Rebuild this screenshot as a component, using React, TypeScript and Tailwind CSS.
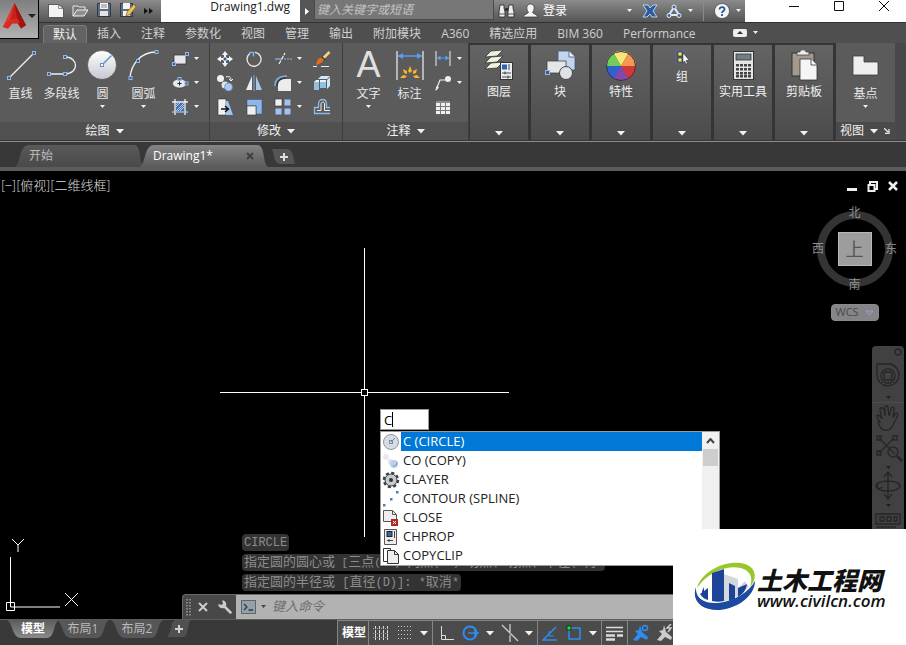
import type { ReactNode } from "react";

const SANS = "font-['Open_Sans','Noto_Sans','Noto_Sans_CJK_SC',sans-serif]";
const MONO = "font-['Liberation_Mono','Noto_Sans_CJK_SC',monospace]";

type IconProps = { w: number; h?: number; className?: string; children: ReactNode };

function Icon({ w, h = w, className = "", children }: IconProps) {
  return (
    <svg width={w} height={h} viewBox={`0 0 ${w} ${h}`} fill="none" className={`shrink-0 ${className}`} aria-hidden="true">
      {children}
    </svg>
  );
}

function Caret({ big = false }: { big?: boolean }) {
  return big ? (
    <Icon w={8} h={5}><path d="M0 0h8L4 4.500z" fill="#f2f2f2" /></Icon>
  ) : (
    <Icon w={5} h={4}><path d="M0 0h5L2.500 3z" fill="#f2f2f2" /></Icon>
  );
}

// Small blue grip square used on the drawing tools
function Grip({ x, y }: { x: number; y: number }) {
  return <rect x={x - 1.5} y={y - 1.5} width="3" height="3" fill="#4c5a70" stroke="#8fb8ee" />;
}

/* ---------- Draw ---------- */

const lineIcon = (
  <Icon w={36}>
    <path d="M6 31 31 6" stroke="#f0f0f0" strokeWidth="1.300" />
    <Grip x={6} y={31} /><Grip x={31} y={6} />
  </Icon>
);

const polylineIcon = (
  <Icon w={36}>
    <path d="M5 27h16c14 0 14-17 0-17" stroke="#f0f0f0" strokeWidth="1.300" />
    <Grip x={5} y={27} /><Grip x={21} y={27} /><Grip x={21} y={10} />
  </Icon>
);

const circleIcon = (
  <Icon w={36}>
    <defs>
      <linearGradient id="ball" x1="0" y1="0" x2="0" y2="1">
        <stop offset="0" stopColor="#ffffff" /><stop offset="1" stopColor="#c4c7ce" />
      </linearGradient>
    </defs>
    <circle cx="17" cy="18" r="14.500" fill="url(#ball)" stroke="#3b3b3b" strokeWidth=".6" />
    <path d="M17 18 26.500 8.500" stroke="#5f8fc6" strokeWidth="1.500" />
    <rect x="15.500" y="16.500" width="3" height="3" fill="#fff" stroke="#5f8fc6" />
  </Icon>
);

const arcIcon = (
  <Icon w={36}>
    <path d="M4 31C5 17 15 5 30 5" stroke="#f0f0f0" strokeWidth="1.300" />
    <Grip x={4.5} y={31} /><Grip x={12} y={14} /><Grip x={30.5} y={5} />
  </Icon>
);

const rectIcon = (
  <Icon w={18}>
    <rect x="3" y="5" width="12" height="9" fill="#e6e7ea" stroke="#2d2d2d" strokeWidth=".7" />
    <Grip x={16} y={4} /><Grip x={3} y={14} />
  </Icon>
);

const ellipseIcon = (
  <Icon w={18}>
    <ellipse cx="8.500" cy="9.500" rx="7" ry="4.500" fill="#e6e7ea" stroke="#333" strokeWidth=".6" />
    <path d="M6.500 9.500h4M8.500 7.500v4" stroke="#222" />
    <Grip x={8.5} y={5} /><Grip x={15.5} y={9.5} />
  </Icon>
);

const hatchIcon = (
  <Icon w={18}>
    <rect x="4.500" y="4.500" width="9" height="9" fill="#4a6ea5" />
    <path d="m5 9 4-4M5 13l8-8M9 13l4-4M5 7l2-2M7 13l6-6" stroke="#a9ccf5" />
    <path d="M4 1v16M14 1v16M1 4h16" stroke="#f1f1f1" strokeWidth="1.300" />
    <path d="M1 14h16" stroke="#9cc3f3" strokeWidth="1.300" />
  </Icon>
);

/* ---------- Modify ---------- */

const moveIcon = (
  <Icon w={18}>
    <path d="M9 3v4M9 11v4M3 9h4M11 9h4" stroke="#f3f3f3" strokeWidth="2" />
    <path d="m9 1 3 4H6zM9 17l-3-4h6zM1 9l4-3v6zM17 9l-4 3V6z" fill="#f3f3f3" />
    <rect x="7.500" y="7.500" width="3" height="3" fill="#4c5a70" stroke="#8fb8ee" />
  </Icon>
);
const rotateIcon = (
  <Icon w={18}>
    <path d="M5 3.500a7 7 0 1 0 5-1.200" stroke="#e9e9e9" strokeWidth="1.300" />
    <path d="M4 2.500h4.500v4" stroke="#7fb0ee" strokeWidth="1.500" />
  </Icon>
);
const trimIcon = (
  <Icon w={18}>
    <path d="M1 9h6" stroke="#8fb8ee" strokeWidth="1.200" />
    <path d="M10 9h8" stroke="#8fb8ee" strokeDasharray="2 1" />
    <path d="M5 14 11 3" stroke="#f1f1f1" strokeWidth="1.200" strokeDasharray="4 1" />
  </Icon>
);
const eraseIcon = (
  <Icon w={18}>
    <path d="M16.500 2 9 9.500" stroke="#f5d48c" strokeWidth="2.500" />
    <path d="M9 8c3 2 1 5-6 7 1-4 2-8 6-7z" fill="#e86b18" />
    <path d="m9 7 3 3" stroke="#333" strokeWidth="1.500" />
    <path d="M0 16.500h4m4 0h8" stroke="#eee" />
  </Icon>
);
const copyIcon = (
  <Icon w={18}>
    <circle cx="4.500" cy="4.500" r="3.500" fill="#f1f1f1" />
    <circle cx="9" cy="11" r="3.500" fill="#dfe6f0" />
    <circle cx="12.500" cy="13" r="4" fill="#a9c8f0" stroke="#5f7fa8" strokeWidth=".6" />
    <path d="M10 3c3-1 5 0 5 3m-2-1 2 2 2-2" stroke="#f1f1f1" />
  </Icon>
);
const mirrorIcon = (
  <Icon w={18}>
    <path d="M7 2v14H1z" fill="#ededed" /><path d="M11 2v14h6z" fill="#aac4e6" />
    <path d="M9 1v16" stroke="#6fa5ea" />
  </Icon>
);
const filletIcon = (
  <Icon w={18}>
    <path d="M4 17V11c0-4 4-6 7-6h6v12z" fill="#ececee" />
    <path d="M1 12C1 5 6 2 13 2" stroke="#7fb0ee" strokeWidth="1.500" />
    <path d="M3 12c0-5 4-8 9-8" stroke="#222" />
  </Icon>
);
const explodeIcon = (
  <Icon w={18}>
    <path d="m5 5 3-3h9l-3 3zM14 6l3-3v9l-3 3z" fill="#cfe6f3" />
    <path d="M1 8h5v8H1zM7 6h6v8H7z" fill="#93bfdd" />
    <path d="m1 8 2-2h3v2zM7 6h6v2H7z" fill="#e5f2f8" />
  </Icon>
);
const stretchIcon = (
  <Icon w={18}>
    <path d="M2 1h8v16H2z" fill="#f2f2f2" stroke="#333" strokeWidth=".6" />
    <path d="M10 3h2l5 14h-7z" fill="#9fc4f2" />
    <path d="M5 11h7m-3-3 3.500 3L9 14" stroke="#111" strokeWidth="1.400" />
  </Icon>
);
const scaleIcon = (
  <Icon w={18}>
    <path d="M2 1.500h15V16H11V8H2z" fill="#8fb6ea" stroke="#405b82" strokeWidth=".6" />
    <rect x="2" y="8" width="9" height="9" fill="#efefef" stroke="#333" strokeWidth=".6" />
  </Icon>
);
const arrayIcon = (
  <Icon w={18}>
    <rect x="1" y="1" width="7" height="7" fill="#f0f0f0" stroke="#333" strokeWidth=".6" />
    <rect x="10.500" y="1.500" width="6" height="6" fill="#9fc4f2" />
    <rect x="1.500" y="10.500" width="6" height="6" fill="#9fc4f2" />
    <rect x="10.500" y="10.500" width="6" height="6" fill="#9fc4f2" />
  </Icon>
);
const offsetIcon = (
  <Icon w={18}>
    <path d="M17 15.500H1.500V9.500H5.500V6c0-6 8-6 8 0v3.500H17" stroke="#8fb8ee" strokeWidth="1.300" />
    <path d="M17 12.500h-5.500V6c0-2.500-3.500-2.500-3.500 0v6.500H4" stroke="#f1f1f1" />
  </Icon>
);

/* ---------- Annotate ---------- */

const dimIcon = (
  <Icon w={36}>
    <path d="M5 4v29M31 4v29" stroke="#f0f0f0" strokeWidth="1.200" />
    <path d="M6 9h24" stroke="#57a0f5" strokeWidth="1.400" />
    <path d="m6 9 5-3v6zM30 9l-5-3v6z" fill="#57a0f5" />
    <g fill="#f7b52b">
      <path d="m18 19 2 5-2 2-2-2zM11 22l4 2v3l-3-1zM25 22l-4 2v3l3-1zM8 31l3-3 4 1-2 2zM28 31l-3-3-4 1 2 2z" />
    </g>
  </Icon>
);
const linearDimIcon = (
  <Icon w={18}>
    <path d="M2 1v15M16 1v15" stroke="#f0f0f0" />
    <path d="M3 8h12" stroke="#57a0f5" />
    <path d="m3 8 3.500-2.500v5zM15 8l-3.500-2.500v5z" fill="#57a0f5" />
  </Icon>
);
const leaderIcon = (
  <Icon w={18}>
    <path d="M2 16 6 6h7" stroke="#f0f0f0" strokeWidth="1.200" />
    <path d="m1.500 17 1-5 2.500 1.500z" fill="#f0f0f0" />
    <circle cx="14" cy="5" r="3" fill="#f0f0f0" />
  </Icon>
);
const tableIcon = (
  <Icon w={18}>
    <rect x="1.500" y="2.500" width="15" height="14" fill="#f0f0f0" stroke="#333" strokeWidth=".6" />
    <path d="M2 4h14" stroke="#8a8a8a" strokeWidth="2" />
    <path d="M2 8.500h14M2 12.500h14M6.500 5v11M11.500 5v11" stroke="#777" />
  </Icon>
);

/* ---------- Collapsed panels ---------- */

const layersIcon = (
  <Icon w={32}>
    <g fill="#eef1e2" stroke="#2e3a2e" strokeWidth=".8">
      <path d="m8 13 12-1-6 6-12 1z" /><path d="m8 7 12-1-6 6-12 1z" /><path d="M8 1 20 0l-6 6-12 1z" />
    </g>
    <rect x="17.500" y="12.500" width="12" height="17" fill="#eceef2" stroke="#333" />
    <rect x="19" y="14.500" width="5" height="5" fill="#2e62b5" />
    <path d="M26 14v6M19 23h9M19 27h9M22 21.500v3M25 25.500v3" stroke="#333" strokeWidth=".9" />
  </Icon>
);
const blockIcon = (
  <Icon w={32}>
    <path d="M14 1h11l6 6v13H14z" fill="#c3d5ee" stroke="#3f5677" strokeWidth=".8" />
    <path d="M25 1v6h6" fill="#e9f1fb" stroke="#3f5677" strokeWidth=".8" />
    <rect x="3" y="11" width="19" height="12" fill="#e4e6ea" stroke="#444" strokeWidth=".8" />
    <circle cx="22" cy="23" r="6.500" fill="#dfe1e5" stroke="#444" />
    <rect x="1.500" y="20.500" width="4" height="4" fill="#4c5a70" stroke="#8fb8ee" />
  </Icon>
);
const wheelIcon = (
  <Icon w={32}>
    <path d="M16 16 8.500 3a15 15 0 0 1 15 0z" fill="#f8e678" />
    <path d="M16 16 23.500 3A15 15 0 0 1 31 16z" fill="#f29a52" />
    <path d="M16 16h15a15 15 0 0 1-7.500 13z" fill="#d4373a" />
    <path d="m16 16 7.500 13a15 15 0 0 1-15 0z" fill="#8347ae" />
    <path d="M16 16 8.500 29A15 15 0 0 1 1 16z" fill="#2f62cf" />
    <path d="M16 16H1A15 15 0 0 1 8.500 3z" fill="#72cc5a" />
    <circle cx="16" cy="16" r="14.500" stroke="#343434" />
  </Icon>
);
const groupIcon = (
  <Icon w={16}>
    <rect x="1.500" y="1.500" width="9" height="12" stroke="#4b63d8" strokeDasharray="1 1" />
    <rect x="4" y="3" width="4" height="4" fill="#d8e686" stroke="#222" strokeWidth=".6" />
    <rect x="4" y="9" width="4" height="4" fill="#d8e686" stroke="#222" strokeWidth=".6" />
    <path d="m9 4 6 7-3 .5 1.500 3-1.500.5-1.500-3L9 14z" fill="#fff" stroke="#222" strokeWidth=".5" />
  </Icon>
);
const calcIcon = (
  <Icon w={32}>
    <rect x="6.500" y="1.500" width="20" height="28" fill="#e6e6e6" stroke="#333" />
    <rect x="9" y="4" width="15" height="6" fill="#6f7f86" stroke="#333" strokeWidth=".8" />
    <g fill="#444">
      {[14, 18, 22, 25].map((y) => [9, 13, 17, 21].map((x) => <rect key={`${x}-${y}`} x={x} y={y} width="3" height="2.500" />))}
    </g>
  </Icon>
);
const pasteIcon = (
  <Icon w={32}>
    <rect x="4" y="3" width="22" height="23" fill="#a3998c" stroke="#333" />
    <path d="M9 5V2h3c0-3 6-3 6 0h3v3z" fill="#ececec" stroke="#333" strokeWidth=".7" />
    <path d="M12 9h11l6 6v15H12z" fill="#f5f5f5" stroke="#333" strokeWidth=".8" />
    <path d="M23 9v6h6" fill="#fff" stroke="#333" strokeWidth=".8" />
  </Icon>
);
const baseIcon = (
  <Icon w={36}>
    <path d="M5 9h11v6h14v13H5z" fill="#efeff1" stroke="#3c3c3c" strokeWidth=".8" />
  </Icon>
);

type Tool = { icon: ReactNode; label: string; menu?: boolean };

function BigTool({ icon, label, menu }: Tool) {
  return (
    <button className="flex w-[41px] flex-col items-center text-[#e8e8e8]">
      <span className="flex h-9 items-center">{icon}</span>
      <span className="h-[22px] leading-[22px] whitespace-nowrap">{label}</span>
      {menu && <Caret />}
    </button>
  );
}

function SmallTool({ icon, label, menu }: Tool) {
  return (
    <button aria-label={label} className="flex h-6 items-center gap-[5px]">
      {icon}
      {menu && <Caret />}
    </button>
  );
}

function Panel({ title, width, children }: { title: string; width: string; children: ReactNode }) {
  return (
    <section className={`flex ${width} shrink-0 flex-col justify-between border-r border-[#3e3e3e] bg-[#5b5b5b] pt-1`}>
      <div className="flex">{children}</div>
      <button className="flex h-[18px] items-center justify-center gap-1.5 bg-[#505050] text-[#f0f0f0]">
        {title} <Caret big />
      </button>
    </section>
  );
}

function FoldedPanel({ icon, label, small }: { icon: ReactNode; label: string; small?: boolean }) {
  return (
    <button className={`mr-[3px] flex w-[58px] shrink-0 flex-col items-center bg-linear-to-b from-[#646464] to-[#4b4b4b] pb-1 text-[#f0f0f0] ${small ? "pt-1" : "pt-[5px]"}`}>
      {icon}
      <span className={`whitespace-nowrap ${small ? "mt-1 leading-4" : "leading-5"}`}>{label}</span>
      <span className="mt-auto"><Caret big /></span>
    </button>
  );
}

const drawSmall: Tool[] = [
  { icon: rectIcon, label: "矩形", menu: true },
  { icon: ellipseIcon, label: "椭圆", menu: true },
  { icon: hatchIcon, label: "图案填充", menu: true },
];

const modifyColumns: Tool[][] = [
  [{ icon: moveIcon, label: "移动" }, { icon: copyIcon, label: "复制" }, { icon: stretchIcon, label: "拉伸" }],
  [{ icon: rotateIcon, label: "旋转" }, { icon: mirrorIcon, label: "镜像" }, { icon: scaleIcon, label: "缩放" }],
  [
    { icon: trimIcon, label: "修剪", menu: true },
    { icon: filletIcon, label: "圆角", menu: true },
    { icon: arrayIcon, label: "阵列", menu: true },
  ],
  [{ icon: eraseIcon, label: "删除" }, { icon: explodeIcon, label: "分解" }, { icon: offsetIcon, label: "偏移" }],
];

const annotateSmall: Tool[] = [
  { icon: linearDimIcon, label: "线性", menu: true },
  { icon: leaderIcon, label: "引线", menu: true },
  { icon: tableIcon, label: "表格" },
];

const folded = [
  { icon: layersIcon, label: "图层" },
  { icon: blockIcon, label: "块" },
  { icon: wheelIcon, label: "特性" },
  { icon: groupIcon, label: "组", small: true },
  { icon: calcIcon, label: "实用工具" },
  { icon: pasteIcon, label: "剪贴板" },
];

function Ribbon() {
  return (
    <div className="flex h-[97px] overflow-hidden bg-[#353535]">
      <Panel title="绘图" width="w-[210px]">
        <BigTool icon={lineIcon} label="直线" />
        <BigTool icon={polylineIcon} label="多段线" />
        <BigTool icon={circleIcon} label="圆" menu />
        <BigTool icon={arcIcon} label="圆弧" menu />
        <div className="ml-[7px]">{drawSmall.map((t) => <SmallTool key={t.label} {...t} />)}</div>
      </Panel>
      <Panel title="修改" width="w-[133px]">
        <div className="flex gap-[11px] pl-1.5">
          {modifyColumns.map((col) => (
            <div key={col[0].label}>{col.map((t) => <SmallTool key={t.label} {...t} />)}</div>
          ))}
        </div>
      </Panel>
      <Panel title="注释" width="w-[126px]">
        <div className="flex pl-[5px]">
          <BigTool icon={<span className="font-['Liberation_Sans',sans-serif] text-4xl leading-9 text-[#e0e0e0]">A</span>} label="文字" menu />
          <BigTool icon={dimIcon} label="标注" />
          <div className="ml-1">{annotateSmall.map((t) => <SmallTool key={t.label} {...t} />)}</div>
        </div>
      </Panel>
      <div className="flex pt-0.5 pl-px">
        {folded.map((f) => <FoldedPanel key={f.label} {...f} />)}
      </div>
      <section className="flex w-[59px] shrink-0 flex-col justify-between bg-[#5b5b5b] pt-1">
        <div className="flex justify-center"><BigTool icon={baseIcon} label="基点" menu /></div>
        <button className="flex h-[18px] items-center gap-1.5 bg-[#4a4a4a] pl-1 text-[#f0f0f0]">
          视图 <Caret big />
          <Icon w={6}><path d="m0 0 4 4M5 1v4.500H1" stroke="#e8e8e8" strokeWidth="1.300" /></Icon>
        </button>
      </section>
      <div className="flex-1 bg-[#484848]" />
    </div>
  );
}

const menuTabs = ["默认", "插入", "注释", "参数化", "视图", "管理", "输出", "附加模块", "A360", "精选应用", "BIM 360", "Performance"];

function TitleBar() {
  return (
    <div className="flex h-[22px] items-stretch bg-linear-to-b from-[#8b8b8b] to-[#555555]">
      <div className="flex w-[122px] shrink-0 items-center gap-2 overflow-hidden pl-[9px]">
        <button aria-label="新建">
          <Icon w={16} h={18}><path d="M.5 2.500h10l5 4v9H.5z" fill="#f3f3f3" stroke="#333" strokeWidth=".7" /><path d="M10.500 2.500v4h5" stroke="#666" strokeWidth=".7" /></Icon>
        </button>
        <button aria-label="打开">
          <Icon w={16} h={18}><path d="M1 14V4h5l1 1h6v3" fill="#777" stroke="#e8e8e8" /><path d="m1 14 4-6h11l-4 6z" fill="#8d8d8d" stroke="#f0f0f0" /></Icon>
        </button>
        <button aria-label="保存">
          <Icon w={16} h={18}>
            <path d="M1.500 1.500h13v13h-13z" fill="#5e6c7d" stroke="#303844" />
            <path d="M4 1h8v6H4z" fill="#f4f4f4" /><path d="M4 9h8v5H4z" fill="#e3e3e3" /><path d="M5 3h6M5 5h6" stroke="#888" />
          </Icon>
        </button>
        <button aria-label="另存为">
          <Icon w={16} h={18}>
            <path d="M.500 1.500h12v13H.5z" fill="#5e6c7d" stroke="#303844" />
            <path d="M3 1h7v6H3zM3 9h7v5H3z" fill="#f4f4f4" /><path d="m14 2-7 8-1 4 4-1.500L16 5z" fill="#f0c257" stroke="#6b5017" strokeWidth=".6" />
          </Icon>
        </button>
        <button aria-label="更多"><Icon w={9} h={6}><path d="m0 0 4 3-4 3zM5 0l4 3-4 3z" fill="#111" /></Icon></button>
      </div>
      <div className="w-[139px] shrink-0 bg-white pr-2.5 text-right leading-[13px] text-[#222]">Drawing1.dwg</div>
      <button aria-label="展开搜索" className="flex w-3.5 shrink-0 items-center justify-center bg-[#555]">
        <Icon w={4} h={7}><path d="m0 0 4 3.500L0 7z" fill="#fff" /></Icon>
      </button>
      <input aria-label="搜索" placeholder="键入关键字或短语" className="mb-0.5 w-[180px] shrink-0 border-r border-b border-l border-[#4a4a4a] bg-[#777777] px-0.5 leading-5 italic outline-none placeholder:text-[#c4c4c4]" />
      <div className="flex flex-1 items-center pl-1 text-white">
        <button aria-label="查找">
          <Icon w={17} h={18}>
            <path d="M2 3h4v3l1 4v5H1v-5zM11 3h4v3l1 4v5h-6v-5z" fill="#eee" stroke="#222" strokeWidth=".8" />
            <path d="M7 6h3v3H7z" fill="#333" /><path d="M1 12h6M10 12h6" stroke="#555" />
          </Icon>
        </button>
        <button className="ml-2 flex items-center gap-[5px]">
          <Icon w={15} h={18}><path d="M7.500 2c5 0 4 7 2 8 0 2 5 2 5 5H.5c0-3 5-3 5-5-2-1-3-8 2-8z" fill="#f5f5f5" stroke="#333" strokeWidth=".7" /></Icon>
          登录
        </button>
        <div className="ml-auto flex items-center">
          <Caret />
          <button aria-label="Exchange" className="ml-2.5">
            <Icon w={16} h={14}><path d="M1 1h5l2 3 3-3h4l-4 6 4 6h-5l-2-3-3 3H1l4-6z" fill="#2c5c9e" stroke="#c9def5" strokeWidth=".9" /></Icon>
          </button>
          <button aria-label="A360" className="ml-2 flex items-center gap-1.5">
            <Icon w={16} h={15}>
              <path d="M8 3 3 11h10z" stroke="#dceaff" strokeWidth="2" />
              <g fill="#46679b" stroke="#e5efff"><circle cx="8" cy="3" r="2" /><circle cx="3" cy="11.500" r="2" /><circle cx="13" cy="11.500" r="2" /></g>
            </Icon>
            <Caret />
          </button>
          <span className="mx-2.5 h-5 w-px bg-[#8a8a8a]" />
          <button aria-label="帮助" className="flex items-center gap-1.5 pr-1">
            <Icon w={16}>
              <circle cx="8" cy="8" r="7.500" fill="#f5f5f5" stroke="#444" strokeWidth=".7" />
              <path d="M5.500 6.500c0-3.500 5.500-3 5 0-.3 1.500-2.500 1.500-2.500 3.500M8 11v2" stroke="#24569c" strokeWidth="1.800" />
            </Icon>
            <Caret />
          </button>
        </div>
      </div>
      <div className="flex w-[161px] shrink-0 justify-between bg-white pr-4 pl-11">
        <button aria-label="最小化"><Icon w={11} h={11} className="mb-2.5"><path d="M0 5.500h10" stroke="#111" /></Icon></button>
        <button aria-label="最大化"><Icon w={11} h={11} className="mb-2.5"><path d="M.5.500h9v9h-9z" stroke="#111" /></Icon></button>
        <button aria-label="关闭"><Icon w={11} h={11} className="mb-2.5"><path d="m0 0 10 10M10 0 0 10" stroke="#111" /></Icon></button>
      </div>
    </div>
  );
}

function Header() {
  return (
    <header className="flex bg-[#4f4f4f]">
      <button aria-label="应用程序菜单" className="flex h-[39px] w-[39px] shrink-0 items-center border-r border-b border-black bg-linear-to-b from-[#7f7f7f] to-[#b2b2b2] pb-1.5 pl-[3px]">
        <Icon w={23} h={26}>
          <path d="M11.500 0 0 24l5 1.500 4-5h6l3 5 5-3z" fill="#c4221c" />
          <path d="M11.500 0 0 24l7-7z" fill="#e2382e" />
          <path d="m11.500 0 11.500 22-5 3.500-3-5z" fill="#9f1411" />
          <path d="M0 24c4-7 9-9 15-8l2 4H9l-4 5.500z" fill="#db2a22" />
        </Icon>
        <Icon w={8} h={5} className="ml-0.5"><path d="M0 0h8L4 4z" fill="#222" /></Icon>
      </button>
      <div className="min-w-0 flex-1">
        <TitleBar />
        <nav className="flex h-[21px] border-t border-[#333] pl-1 text-[#cfcfcf]">
          {menuTabs.map((tab, i) => (
            <button
              key={tab}
              className={`mt-0.5 whitespace-nowrap ${i === 0 ? "rounded-t-sm border-x border-t border-[#7a7a7a] bg-[#636363] px-[9px] text-[#f0f0f0]" : "px-2.5"}`}
            >
              {tab}
            </button>
          ))}
          <button aria-label="最小化功能区" className="flex items-center gap-1.5 pl-[27px]">
            <Icon w={14} h={8}><rect width="14" height="8" rx="2" fill="#eeeeee" /><path d="m7 2 3 3H4z" fill="#333" /></Icon>
            <Caret />
          </button>
        </nav>
      </div>
    </header>
  );
}

function FileTabs() {
  return (
    <div className="mt-px flex h-[30px] items-end border-t border-b-4 border-t-[#8b8b8b] border-b-[#5b5b5b] bg-[#383838] pl-[15px]">
      <button className="h-[22px] w-[129px] bg-linear-to-b from-[#595959] to-[#4a4a4a] pl-3.5 text-left leading-[22px] text-[#bcbcbc] [clip-path:path('M0_22C6_18_4_0_14_0H119C127_0_123_17_129_22Z')]">
        开始
      </button>
      <div className="-ml-1 flex h-[22px] w-32 items-center justify-between bg-linear-to-b from-[#858585] to-[#5b5b5b] pr-3.5 pl-[13px] text-white [clip-path:path('M0_22C6_18_4_0_14_0H117C126_0_122_18_128_22Z')]">
        <button>Drawing1*</button>
        <button aria-label="关闭标签"><Icon w={8}><path d="m1 1 6 6M7 1 1 7" stroke="#3f3f3f" strokeWidth="2" /></Icon></button>
      </div>
      <button aria-label="新标签" className="mb-[3px] ml-1 flex h-[15px] w-[23px] items-center justify-center bg-[#555] [clip-path:path('M0_0H15C21_0_21_9_23_15H8C2_15_2_5_0_0Z')]">
        <Icon w={8}><path d="M0 4h8M4 0v8" stroke="#ddd" strokeWidth="2" /></Icon>
      </button>
    </div>
  );
}

function ViewCube() {
  return (
    <div className="absolute top-[34px] right-[9px] flex w-[85px] flex-col items-center text-[#8f8f8f]">
      <div className="grid h-[88px] w-full grid-cols-[12px_1fr_12px] grid-rows-[16px_1fr_16px] items-center justify-items-center leading-4">
        <svg viewBox="0 0 76 76" className="col-start-1 col-end-4 row-start-1 row-end-4 h-[76px] w-[76px]" aria-hidden="true">
          <circle cx="38" cy="38" r="34" fill="none" stroke="#343434" strokeWidth="8" />
        </svg>
        <button className="col-start-2 row-start-1">北</button>
        <button className="col-start-1 row-start-2">西</button>
        <button className="col-start-2 row-start-2 h-[34px] w-[34px] border border-[#b8b8b8] bg-[#9d9d9d] text-lg leading-8 text-[#555]">上</button>
        <button className="col-start-3 row-start-2">东</button>
        <button className="col-start-2 row-start-3">南</button>
      </div>
      <button className="mt-[11px] flex h-[17px] w-12 items-center justify-between rounded border border-[#8a8a8a] bg-[#858589] px-1 text-[11px] text-[#484848]">
        WCS
        <Icon w={9} h={6}><path d="m1 1 3.500 4L8 1z" stroke="#9d9dbd" /></Icon>
      </button>
    </div>
  );
}

function NavBar() {
  return (
    <div className="absolute top-[175px] right-0.5 bottom-0 flex w-8 flex-col items-center rounded-t bg-[#414141]">
      <Icon w={32} h={190}>
        <g stroke="#262626" strokeWidth="1.300">
          <circle cx="26" cy="6" r="3" />
          <path d="M5 18h13a11 11 0 1 1-13 10z" />
          <circle cx="16" cy="30" r="7" /><rect x="12" y="26" width="8" height="8" rx="2" />
          <path d="M8 76c-4-6-4-8 0-6l2 3-2-9c0-3 3-3 4 0l1 6V62c0-3 3-3 3 0l1 8 2-7c1-3 3-2 3 0l-1 9 2-4c2-2 4 0 2 3l-4 8c-3 7-12 8-15-3z" />
          <path d="M7 92l16 16M22 92 7 107M5 90h4v4H5zM21 90h4v4h-4zM5 105h4v4H5z" />
          <circle cx="21" cy="106" r="5" /><path d="m25 110 5 5" strokeWidth="2.500" />
          <path d="M16 127v25m-4-21 4-5 4 5m-8 17 4 5 4-5" /><ellipse cx="16" cy="140" rx="12" ry="5" /><path d="m5 137 1 6 5-2" />
          <path d="M4 168h24v10H4zM8 171h4v4H8zM15 171h4v4h-4zM22 171h3v4h-3zM4 181h20" />
        </g>
        <path d="M14 50h5l-2.500 3zM14 120h5l-2.500 3zM14 158h5l-2.500 3z" fill="#202020" />
        <path d="M0 56.500h32" stroke="#4d4d4d" />
      </Icon>
    </div>
  );
}

const suggestions = [
  {
    text: "C (CIRCLE)",
    icon: <Icon w={18}><circle cx="9" cy="9" r="7.500" fill="#d9dbe0" stroke="#8d97a8" /><path d="m9 9 4-4" stroke="#5f8fc6" /><rect x="7.500" y="7.500" width="3" height="3" stroke="#5f8fc6" /></Icon>,
  },
  {
    text: "CO (COPY)",
    icon: <Icon w={18}><circle cx="4" cy="5" r="3" fill="#e8e9f1" /><circle cx="9" cy="10" r="3" fill="#dfe4ef" /><circle cx="12" cy="12" r="4" fill="#bccfec" /><path d="M11 14c3 0 4-1 4-4" stroke="#6f96cd" /></Icon>,
  },
  {
    text: "CLAYER",
    icon: (
      <Icon w={18}>
        <circle cx="9" cy="9" r="7" stroke="#3a3f45" strokeWidth="2.500" strokeDasharray="3.100 2.400" />
        <circle cx="9" cy="9" r="6" fill="#c7cacd" stroke="#3a3f45" /><circle cx="9" cy="9" r="2" fill="#333" />
      </Icon>
    ),
  },
  {
    text: "CONTOUR (SPLINE)",
    icon: <Icon w={18}><path d="M1 14h2.500v2.500H1zM8 8h2.500v2.500H8zM14 1h2.500v2.500H14z" fill="#4f7fb5" /></Icon>,
  },
  {
    text: "CLOSE",
    icon: <Icon w={18}><path d="M1.500 1.500h9l4 4v7h-13z" fill="#eee" stroke="#555" /><path d="M10.500 1.500v4h4" stroke="#555" /><rect x="9" y="10" width="7" height="7" fill="#b3262b" /><path d="m11 12 3 3m0-3-3 3" stroke="#fff" /></Icon>,
  },
  {
    text: "CHPROP",
    icon: <Icon w={18}><path d="M2.500 1.500h12v15h-12z" fill="#ececec" stroke="#555" /><rect x="5" y="3.500" width="5" height="5" fill="#3667ad" stroke="#222" /><path d="M12.500 3v7M5 12.500h6M7 11v3" stroke="#444" /></Icon>,
  },
  {
    text: "COPYCLIP",
    icon: <Icon w={18}><path d="M1.500 1.500h7v13h-7z" fill="#fff" stroke="#333" /><path d="M5.500 3.500h7l4 4v9h-11z" fill="#eee" stroke="#333" /><path d="M12.500 3.500v4h4" stroke="#333" /></Icon>,
  },
];

function CommandPopup() {
  return (
    <div className="absolute top-[238px] left-[380px] w-[340px] text-[13px]">
      <div className="relative w-[49px]">
        <input aria-label="命令" defaultValue="C" className="block h-[21px] w-full border border-[#999] bg-white px-[3px] text-black caret-transparent outline-none" />
        <span className="absolute top-[3px] left-3 h-[15px] w-px bg-black" />
      </div>
      <div className="mt-px flex border border-[#9b9b9b] bg-white">
        <ul role="listbox" className="flex-1">
          {suggestions.map((s, i) => (
            <li key={s.text} role="option" aria-selected={i === 0} className="flex h-[19px] items-center">
              <span className="flex w-5 pl-px">{s.icon}</span>
              <span className={`flex-1 pl-0.5 leading-[19px] ${i === 0 ? "bg-[#0078d7] text-white" : "text-[#222]"}`}>{s.text}</span>
            </li>
          ))}
        </ul>
        <div className="flex w-[17px] flex-col items-center bg-[#f0f0f0]">
          <button aria-label="向上滚动" className="flex h-[17px] items-center"><Icon w={9} h={6}><path d="m1 5 3.500-4L8 5" stroke="#444" strokeWidth="2" /></Icon></button>
          <div className="h-[17px] w-[15px] bg-[#cdcdcd]" />
        </div>
      </div>
    </div>
  );
}

function CommandLine() {
  const row = "w-fit rounded-sm bg-[#333] px-0.5 h-[17px] leading-[17px] whitespace-pre";
  return (
    <div className="absolute bottom-0 left-[182px] right-[233px]">
      <div className={`mb-[3px] ml-[60px] flex flex-col gap-[3px] text-[13px] text-[#8c8c8c] ${MONO}`}>
        <p className={row}><span className="text-xs">CIRCLE</span></p>
        <p className={row}>
          指定圆的圆心或<span className="text-[11px]"> [</span>三点<span className="text-[11px]">(3P)/</span>两点<span className="text-[11px]">(2P)/</span>切点、切点、半径<span className="text-[11px]">(T)]:</span>
        </p>
        <p className={row}>
          指定圆的半径或<span className="text-xs"> [</span>直径<span className="text-xs">(D)]: *</span>取消<span className="text-xs">*</span>
        </p>
      </div>
      <div className="flex h-[25px] items-stretch rounded-tl-sm border-t border-l border-[#6a6a6a] bg-[#484848]">
        <div className="flex w-[53px] items-center justify-between pr-1 pl-[3px]">
          <Icon w={6} h={17}><path d="M1 0v17M4 0v17" stroke="#999" strokeWidth="1.500" strokeDasharray="1.500 1.500" /></Icon>
          <div className="flex items-center gap-2.5">
            <button aria-label="关闭"><Icon w={10}><path d="m1 1 8 8M9 1 1 9" stroke="#ccc" strokeWidth="2" /></Icon></button>
            <button aria-label="自定义">
              <Icon w={14}><path d="m6 6 6.500 6.500" stroke="#ccc" strokeWidth="2.500" strokeLinecap="round" /><path d="M4 .5 5 3.500 3.500 5 .5 4C0 7 3 9 6 8l2-2C9 3 7 0 4 .5z" fill="#ccc" /></Icon>
            </button>
          </div>
        </div>
        <div className="flex flex-1 items-center bg-[#b2b2b2] pl-[5px]">
          <button aria-label="最近使用的命令" className="flex items-center gap-[5px]">
            <Icon w={15} h={14}><rect x=".5" y=".5" width="14" height="13" fill="#93a0a8" stroke="#5c666c" /><path d="m3 4 3 3-3 3M7.500 10H12" stroke="#2c3a42" strokeWidth="1.300" /></Icon>
            <Icon w={5} h={4}><path d="M0 0h5L2.500 3z" fill="#444" /></Icon>
          </button>
          <input aria-label="键入命令" placeholder="键入命令" className="ml-1.5 w-full bg-transparent text-[13px] italic outline-none placeholder:text-[#6e6e6e]" />
        </div>
      </div>
    </div>
  );
}

function Canvas() {
  return (
    <main className="relative flex-1 overflow-hidden bg-black">
      <p className="px-px pt-1 font-['Noto_Sans_CJK_SC',sans-serif] text-[13px] leading-5 font-light text-[#dcdcdc]">[−][俯视][二维线框]</p>
      <div className="absolute top-2.5 right-2 flex items-center gap-2.5">
        <button aria-label="最小化视口"><Icon w={11} h={12}><path d="M1 8.500h10" stroke="#eee" strokeWidth="3" /></Icon></button>
        <button aria-label="还原视口"><Icon w={11} h={12}><path d="M3 3V1h7v7H8.500M1.500 4h6v6h-6z" stroke="#eee" strokeWidth="2" /></Icon></button>
        <button aria-label="关闭视口"><Icon w={10} h={12}><path d="m1 1 8 8M9 1 1 9" stroke="#eee" strokeWidth="2.500" /></Icon></button>
      </div>
      <ViewCube />
      <NavBar />
      {/* Crosshair cursor */}
      <svg width="290" height="290" className="absolute top-[77px] left-[220px]" fill="none" stroke="#fff" aria-hidden="true">
        <path d="M144.500 0v141M144.500 148v141M0 144.500h141M148 144.500h141" />
        <rect x="141.500" y="141.500" width="6" height="6" />
      </svg>
      {/* UCS axes */}
      <svg width="80" height="76" className="absolute bottom-1.5 left-1.5" fill="none" stroke="#fff" aria-hidden="true">
        <path d="M4.500 20v50H54M.5 65.500h8v8h-8zM6 2l6 6 6-6M12 8v7M59 56l13 13M72 56 59 69" />
      </svg>
      <CommandLine />
      <CommandPopup />
    </main>
  );
}

const statusCell = "flex items-center border-l border-[#858585]";

function StatusBar() {
  const tab = "h-[18px] w-[52px] leading-[18px] [clip-path:path('M0_0H52C46_3_48_18_40_18H14C5_18_6_3_0_0Z')]";
  return (
    <footer className="flex h-[26px] border-t border-[#5c5c5c] bg-[#393939]">
      <nav className="flex w-[337px] shrink-0 gap-0.5 pl-[7px] text-[#bababa]">
        <button className={`${tab} bg-linear-to-b from-[#5c5c5c] to-[#8a8a8a] font-bold text-white`}>模型</button>
        <button className={`${tab} -ml-1 bg-[#575757]`}>布局1</button>
        <button className={`${tab} bg-[#575757]`}>布局2</button>
        <button aria-label="新建布局" className="ml-0.5 flex h-[18px] w-6 items-center justify-center bg-[#505050] [clip-path:path('M8_0H24C20_3_22_17_16_17H0C5_12_3_3_8_0Z')]">
          <Icon w={8}><path d="M0 4h8M4 0v8" stroke="#d0d0d0" strokeWidth="2" /></Icon>
        </button>
      </nav>
      <div className="flex min-w-0 flex-1 overflow-hidden border-t border-[#858585] bg-[#4b4b4b]">
        <button className={`${statusCell} w-[31px] shrink-0 justify-center pl-0.5 font-bold text-white`}>模型</button>
        <div className={`${statusCell} w-16 shrink-0 justify-between px-1`}>
          <button aria-label="栅格"><Icon w={16}><path d="M2.500 1v14M6.500 1v14M10.500 1v14M14.500 1v14" stroke="#ddd" strokeDasharray="3 1" /><path d="M0 3.500h16M0 8.500h16M0 12.500h16" stroke="#bbb" strokeWidth=".8" strokeDasharray="1 1" /></Icon></button>
          <button aria-label="捕捉"><Icon w={16}><path d="M1 1.500h15M1 5.500h15M1 9.500h15M1 13.500h15" stroke="#ccc" strokeDasharray="1 2" /></Icon></button>
          <Caret big />
        </div>
        <div className={`${statusCell} w-[105px] shrink-0 justify-between pr-1 pl-1.5`}>
          <button aria-label="正交"><Icon w={16}><path d="M2.500 1v13.500H15M2.500 10.500h4v4" stroke="#ddd" /></Icon></button>
          <button aria-label="极轴"><Icon w={18}><circle cx="8" cy="9" r="6.500" stroke="#2e8cf5" strokeWidth="2" /><path d="M6 9h11M13 5v8" stroke="#2e8cf5" strokeWidth="1.500" /></Icon></button>
          <Caret big />
          <button aria-label="等轴测"><Icon w={18}><path d="m1 1 16 16M9 0v8m0 3v7" stroke="#ccc" strokeWidth="1.300" /></Icon></button>
          <Caret big />
        </div>
        <div className={`${statusCell} w-16 shrink-0 justify-between px-1`}>
          <button aria-label="对象捕捉追踪"><Icon w={16}><path d="M15 15H1L14 2" stroke="#2e8cf5" strokeWidth="1.500" /><path d="M7 6v5h5" stroke="#2e8cf5" /></Icon></button>
          <button aria-label="对象捕捉"><Icon w={16}><rect x="3" y="3" width="11" height="11" stroke="#2e8cf5" strokeWidth="1.500" /><rect x="1" y="1" width="4" height="4" fill="#2cdb34" stroke="#09430c" /></Icon></button>
          <Caret big />
        </div>
        <button aria-label="线宽" className={`${statusCell} w-[26px] shrink-0 justify-center`}>
          <Icon w={17}><path d="M0 2.500h17M0 6.500h17" stroke="#ddd" strokeWidth="1.500" /><path d="M0 10.500h9m2 0h6M0 14.500h9" stroke="#ddd" strokeWidth="2.500" /></Icon>
        </button>
        <div className={`${statusCell} shrink-0 gap-1.5 pl-1`}>
          <button aria-label="注释可见性"><Icon w={18}><path d="m8 1 2 7 6 5-1 3-6-3-4 4-4-1 5-6-3-3 4-1z" fill="#2e8cf5" /><circle cx="13" cy="4" r="2.500" stroke="#2e8cf5" strokeWidth="1.500" /></Icon></button>
          <button aria-label="自动缩放"><Icon w={18}><path d="m8 1 2 7 6 5-1 3-6-3-4 4-4-1 5-6-3-3 4-1z" fill="#ccc" /><path d="m15 0-4 4h4l-3 4" stroke="#ccc" strokeWidth="1.500" /></Icon></button>
        </div>
      </div>
    </footer>
  );
}

function SiteBadge() {
  return (
    <a href="#civilcn" className="absolute right-0 bottom-0 flex h-[116px] w-[233px] items-center bg-white pl-[21px] text-[#111]">
      <Icon w={63} h={52}>
        <path d="M3 27C8 9 34-2 51 3c12 4 12 15 5 23 3-9 1-16-9-19C29 3 12 14 3 27z" fill="#98c72c" />
        <path d="m30 13 14 5v17l-14 6zM43 28l8-8 4 6-12 10z" fill="#d4d7dc" />
        <path d="M18 12 30 8v32c-4 1-8 1-12 0zM14 27v12c-4-1-6-3-8-6zM35 22l6 3v13l-6 2zM8 30l2-4v7H8zM44 27l9-4c-1 6-4 10-9 13z" fill="#1c4397" />
        <path d="M2 26c-1 12 9 17 22 16 17-2 31-11 37-22 0 14-16 27-35 29C8 50-3 40 2 26z" fill="#1b4a9e" />
      </Icon>
      <span className="flex flex-col italic">
        <span className="font-['Noto_Sans_CJK_SC',sans-serif] text-[25px] leading-7 font-black">土木工程网</span>
        <span className="font-['Open_Sans','Noto_Sans',sans-serif] text-[17px] leading-4 font-semibold">www.civilcn.com</span>
      </span>
    </a>
  );
}

export default function App() {
  return (
    <div className={`relative flex min-h-screen flex-col overflow-hidden bg-[#383838] text-xs ${SANS}`}>
      <Header />
      <Ribbon />
      <FileTabs />
      <Canvas />
      <StatusBar />
      <SiteBadge />
    </div>
  );
}
